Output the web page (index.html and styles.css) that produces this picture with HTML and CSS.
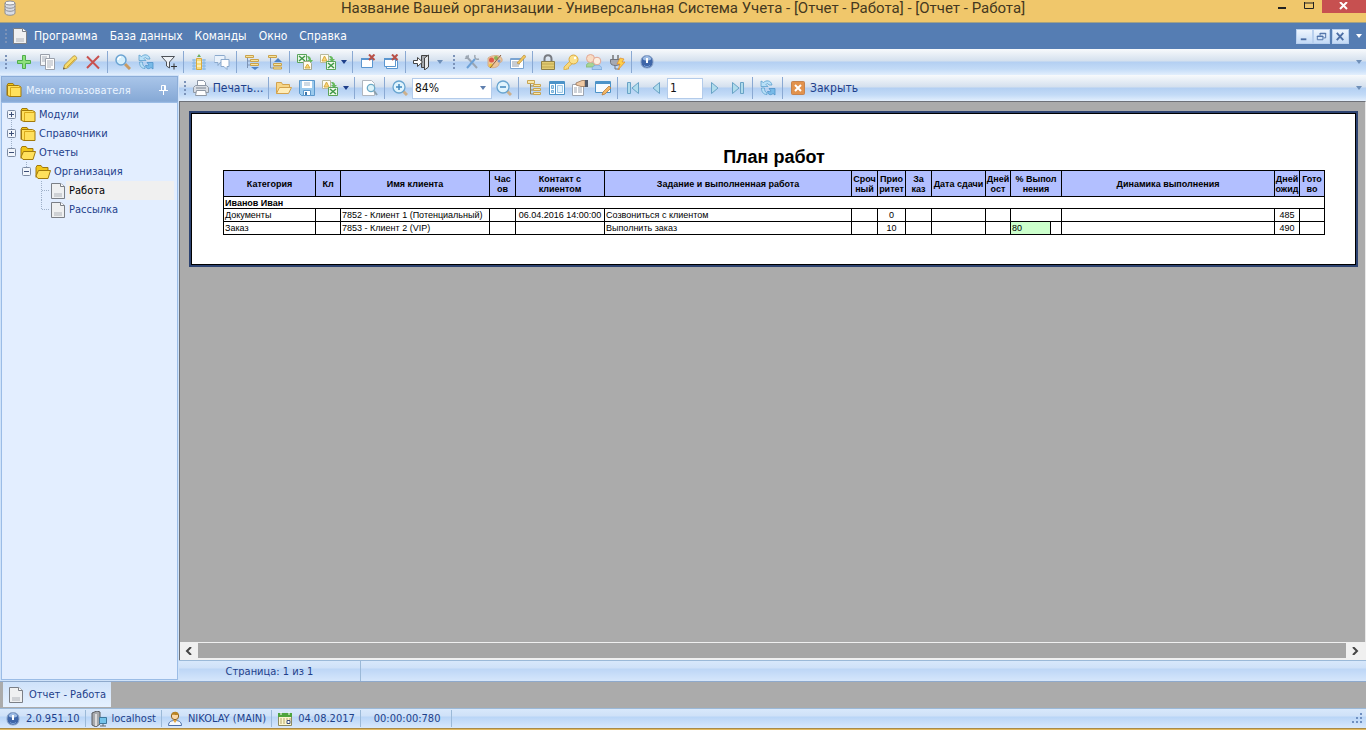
FILE: index.html
```html
<!DOCTYPE html>
<html lang="ru">

<head>
    <meta charset="UTF-8">
    <meta name="viewport" content="width=device-width, initial-scale=1.0">
    <title>Универсальная Система Учета</title>
    <link rel="stylesheet" href="styles.css">
</head>

<body>
    <svg class="sprite" aria-hidden="true">
        <symbol id="db" viewBox="0 0 16 16"><path d="M3 3v10c0 3 10 3 10 0V3" fill="#d9dce4" stroke="#8d8f98"/><ellipse cx="8" cy="3" rx="5" ry="2" fill="#f5f5f5" stroke="#8d8f98"/><path d="M3 6c0 3 10 3 10 0M3 9c0 3 10 3 10 0" fill="none" stroke="#8d8f98"/></symbol>
        <symbol id="doc" viewBox="0 0 16 16"><path d="M1.500 .5h9l4 3v12h-13z" fill="#eff0f1" stroke="#7b7f86"/><path d="M10.500 .5v3h4" fill="#fff" stroke="#7b7f86"/><path d="M4 11h8M4 13h8" stroke="#aeb2b8"/></symbol>
        <symbol id="plus" viewBox="0 0 16 16"><path d="M6.500 1.500h3v5h5v3h-5v5h-3v-5h-5v-3h5z" fill="#8ee07c" stroke="#4fae4c"/></symbol>
        <symbol id="copy" viewBox="0 0 16 16"><path d="M1.500 .5h9v11h-9z" fill="#f4f6f8" stroke="#9aa0aa"/><path d="M3 3h5M3 5h3M3 7h3" stroke="#a9afb9"/><path d="M6.500 4.500h9v11h-9z" fill="#fff" stroke="#9aa0aa"/><path d="M8 7h6M8 9h6M8 11h6M8 13h4" stroke="#a9afb9"/></symbol>
        <symbol id="pencil" viewBox="0 0 16 16"><path d="M1.500 15l1-4 9-9c1-1 4 1 3 3l-9 9z" fill="#f7dc6c" stroke="#b99a45"/><path d="M5 13l8-8" stroke="#d2a936"/><path d="M1 15.500l2-.7-1.300-1.500z" fill="#555"/></symbol>
        <symbol id="cross" viewBox="0 0 16 16"><path d="M2 2.500l12 12M14 2L2 14" stroke="#c9514f" stroke-width="2"/></symbol>
        <symbol id="find" viewBox="0 0 16 16"><path d="M10 10l5 5" stroke="#c99b63" stroke-width="3"/><circle cx="6" cy="6" r="5" fill="#d5effc" stroke="#6aa3d2" stroke-width="1.500"/><path d="M3 6a3 3 0 013-3" fill="none" stroke="#fff" stroke-width="1.500"/></symbol>
        <symbol id="refresh" viewBox="0 0 16 16"><path d="M1 1l2.500 1.500C6 0 11 0 12 5H9C8 3 6.500 3.500 6 4.500L8 6.500H1z" fill="#b9e0f7" stroke="#5b9fce" stroke-width=".8"/><path d="M1.500 8h3c0 2.500 .5 4 2.500 5v1.500c-4 0-5.500-3-5.500-6.500z" fill="#b9e0f7" stroke="#5b9fce" stroke-width=".8"/><path d="M15 15l-2-1.500C11 15.500 8 15 7.500 11.500h2c.5 .5 1 .5 1.500-.5L9 8.500h6z" fill="#78bae8" stroke="#4c92c8" stroke-width=".8"/></symbol>
        <symbol id="filter" viewBox="0 0 16 16"><path d="M.5 2.500h13L8.500 8v6l-3-2V8z" fill="#eef2f7" stroke="#4d5157"/><path d="M10 12.500h6M13 9.500v6" stroke="#333"/></symbol>
        <symbol id="sum" viewBox="0 0 16 16"><path d="M1 6h14M1 9h14M1 12h14M1 15h14M3 5v11M13 5v11" stroke="#85b7e3"/><path d="M5.500 4.500h5v11h-5z" fill="#f7dd7a" stroke="#d9a93e"/><path d="M6 8h4M6 12h4" stroke="#fff"/><path d="M8 0l2 3H6z" fill="#6fae60"/></symbol>
        <symbol id="chat" viewBox="0 0 16 16"><path d="M1 1.500h9a1 1 0 011 1v5a1 1 0 01-1 1H6l-2 3v-3H1a1 1 0 01-1-1v-5z" fill="#eaf2fb" stroke="#8ba9cc"/><path d="M7 5.500h8v7h-2v3l-3-3H7z" fill="#fff" stroke="#8ba9cc"/></symbol>
        <symbol id="expand" viewBox="0 0 16 16"><path d="M3.500 3v11M3.500 7H7M3.500 11H7" stroke="#7c93b5"/><path d="M1.500 1.500h8v2h-8zM6.500 5.500h8v2h-8zM6.500 9.500h8v2h-8z" fill="#f7e49c" stroke="#caa24b"/><path d="M7 13h8l-4 3z" fill="#4f83c4"/></symbol>
        <symbol id="collapse" viewBox="0 0 16 16"><path d="M3.500 3v11M3.500 14H7" stroke="#7c93b5"/><path d="M1.500 1.500h8v2h-8zM6.500 9.500h8v2h-8zM6.500 13h8v2h-8z" fill="#f7e49c" stroke="#caa24b"/><path d="M7 8h8l-4-4z" fill="#4f83c4"/></symbol>
        <symbol id="excel" viewBox="0 0 16 16"><path d="M.5 .5h9v8h-9z" fill="#eef8ea" stroke="#5aa45a"/><path d="M2 2l6 5M8 2L2 7" stroke="#3d9745" stroke-width="1.500"/><path d="M10 2c3 0 4 2 4 4h2l-3 4-3-4h2" fill="#66b95c"/><path d="M6.500 15.500V7.500h6l2 2v6z" fill="#fffdf0" stroke="#a5a98f"/><path d="M10.500 10l2.500 4H8z" fill="#f7d978" stroke="#d9a93e"/></symbol>
        <symbol id="toexcel" viewBox="0 0 16 16"><path d="M.5 .5h8v8h-8z" fill="#fffdf0" stroke="#b8b99c"/><path d="M4.500 2L7 7H2z" fill="#f7d978" stroke="#d9a93e"/><path d="M9 2c4 0 4 2 4 3h2l-3 3-3-3h2" fill="#66b95c"/><path d="M6.500 7.500h9v8h-9z" fill="#eef8ea" stroke="#5aa45a"/><path d="M8 9l6 5M14 9l-6 5" stroke="#3d9745" stroke-width="1.500"/></symbol>
        <symbol id="winclose" viewBox="0 0 16 16"><path d="M1.500 4.500h11v9h-11z" fill="#fff" stroke="#5b96cf"/><path d="M1 5h12" stroke="#5b96cf" stroke-width="2"/><path d="M9 .5l5.500 5.500M14.500 .5L9 6" stroke="#b85048" stroke-width="2"/></symbol>
        <symbol id="winsclose" viewBox="0 0 16 16"><path d="M3.500 6.500h11v8h-11z" fill="#fff" stroke="#5b96cf"/><path d="M1.500 4.500h11v8h-11z" fill="#fff" stroke="#5b96cf"/><path d="M1 5h12" stroke="#5b96cf" stroke-width="2"/><path d="M9 .5l5.500 5.500M14.500 .5L9 6" stroke="#b85048" stroke-width="2"/></symbol>
        <symbol id="exit" viewBox="0 0 16 16"><path d="M8.500 1.500h6v12h-6z" fill="#a7abb0" stroke="#444"/><path d="M11.500 4l4-3v12l-4 3z" fill="#e8eaec" stroke="#444"/><path d="M.5 6.500h4v-3l5 4.500-5 4.500v-3h-4z" fill="#fff" stroke="#444"/></symbol>
        <symbol id="tools" viewBox="0 0 16 16"><path d="M2 2l11 12" stroke="#9ba5b1" stroke-width="2"/><path d="M11 5L3 14" stroke="#6ba0d6" stroke-width="2"/><path d="M11 1c-1 3 1 5 4 4M1 4c2 1 4-1 3-3" fill="none" stroke="#9ba5b1" stroke-width="1.500"/></symbol>
        <symbol id="palette" viewBox="0 0 16 16"><path d="M1 4c3-3 13-4 14 1 1 4-3 3-3 5 0 4-9 5-11 2z" fill="#ebc59c" stroke="#d2a47b" stroke-width=".8"/><circle cx="4.500" cy="6" r="2.500" fill="#dd5a4a"/><circle cx="9" cy="4" r="2" fill="#8bb455"/><circle cx="4" cy="11.500" r="2" fill="#f2c93c"/><circle cx="12" cy="7" r="1.500" fill="#7b97c8"/><path d="M3 14L14 1" stroke="#8d5f40"/></symbol>
        <symbol id="editform" viewBox="0 0 16 16"><path d="M.5 4.500h13v10H.5z" fill="#fff" stroke="#7aa4d2"/><path d="M1 5h12" stroke="#7aa4d2" stroke-width="2"/><path d="M2 8h6M2 10h8M2 12h7" stroke="#8d98a6"/><path d="M7 9l7-8 2 1.500L9 10z" fill="#f3c85e" stroke="#b88c3c" stroke-width=".7"/></symbol>
        <symbol id="lock" viewBox="0 0 16 16"><path d="M4.500 8V5c0-5 7-5 7 0v3" fill="none" stroke="#777a80" stroke-width="2"/><path d="M1.500 7.500h13v8h-13z" fill="#e2cc73" stroke="#8f8048"/><path d="M2 10h12M2 13h12" stroke="#bfa750"/></symbol>
        <symbol id="key" viewBox="0 0 16 16"><path d="M1 13l7-7 2.500 2.500-5 4.500v2H3v1H1z" fill="#f9d97c" stroke="#d9a83e" stroke-width=".8"/><circle cx="10.500" cy="5.500" r="4.500" fill="#fbe08a" stroke="#d9a83e"/><circle cx="12" cy="4" r="1.200" fill="#fff"/></symbol>
        <symbol id="users" viewBox="0 0 16 16"><path d="M0 13c0-6 9-6 9 0z" fill="#a6d496" stroke="#80b871" stroke-width=".8"/><circle cx="4.500" cy="4.500" r="4" fill="#f8dcc4" stroke="#e2a794"/><path d="M6 15.500c0-6 10-6 10 0z" fill="#a9ccf0" stroke="#78a7da" stroke-width=".8"/><circle cx="11" cy="7" r="3.800" fill="#fdeee0" stroke="#e2a794"/></symbol>
        <symbol id="plug" viewBox="0 0 16 16"><path d="M4 1v5M9 1v5" stroke="#777" stroke-width="1.500"/><path d="M1.500 5.500h10v3c0 4-10 4-10 0z" fill="#a6a9b3" stroke="#72757e"/><path d="M6 11v4h5" stroke="#72757e" fill="none"/><path d="M11 4l4 1-2 3h3l-7 8 2-6H8z" fill="#ffd04a" stroke="#e08a2c" stroke-width=".7"/></symbol>
        <symbol id="info" viewBox="0 0 16 16"><rect x="2" y="1.500" width="12" height="12.500" rx="5.500" fill="#3f66a8" stroke="#8fa6c8"/><path d="M3.500 5c1-4 8-4 9 0-2 2-7 2-9 0z" fill="#9dbbe3"/><path d="M7 4h2v5H7z" fill="#fff"/><path d="M5 11.500c2 1.500 4 1.500 6 0" fill="none" stroke="#7ea3d8"/></symbol>
        <symbol id="print" viewBox="0 0 16 16"><path d="M4.500 7V.5h6l2 2V7" fill="#fff" stroke="#8c96a5"/><path d="M.5 7.500l2-2h11l2 2v5H.5z" fill="#d9dde3" stroke="#8f98a4"/><path d="M3.500 10.500h9l1 5h-11z" fill="#fff" stroke="#8f98a4"/><path d="M3 8h10" stroke="#7b8490"/></symbol>
        <symbol id="open" viewBox="0 0 16 16"><path d="M.5 13.500v-11h5l1 2h7v3" fill="#f7d688" stroke="#d3a24d"/><path d="M.5 13.500l3-6h12l-3 6z" fill="#ffedb8" stroke="#d3a24d"/></symbol>
        <symbol id="save" viewBox="0 0 16 16"><path d="M.5 .5h15v15h-13l-2-2z" fill="#9bcaed" stroke="#5b98cc"/><path d="M3 1h10v7H3z" fill="#fff"/><path d="M5 3h6M5 5h6" stroke="#9bb4c9"/><path d="M4.500 10.500h7v5h-7z" fill="#fff" stroke="#5b98cc"/><path d="M6 12h2v3H6z" fill="#3f78ac"/></symbol>
        <symbol id="preview" viewBox="0 0 16 16"><path d="M.5 .5h9l3 3v12H.5z" fill="#fff" stroke="#b0b6bf"/><circle cx="9" cy="8" r="3.700" fill="#ddf2f8" stroke="#6ba9c6" stroke-width="1.300"/><path d="M12 11l3 4" stroke="#8ba0ae" stroke-width="2"/></symbol>
        <symbol id="zoomin" viewBox="0 0 16 16"><path d="M11 11l4 4" stroke="#cdb08c" stroke-width="3"/><circle cx="7" cy="7" r="6" fill="#e0f4fd" stroke="#68a4cf" stroke-width="1.300"/><path d="M4 7h6M7 4v6" stroke="#4087bd" stroke-width="1.500"/></symbol>
        <symbol id="zoomout" viewBox="0 0 16 16"><path d="M11 11l4 4" stroke="#cdb08c" stroke-width="3"/><circle cx="7" cy="7" r="6" fill="#e0f4fd" stroke="#68a4cf" stroke-width="1.300"/><path d="M4 7h6" stroke="#4087bd" stroke-width="1.500"/></symbol>
        <symbol id="outline" viewBox="0 0 16 16"><path d="M4.500 3v11M4.500 6H8M4.500 10H8M4.500 14H8" stroke="#8f8258"/><path d="M1.500 .5h7v3h-7zM7.500 4.500h7v2h-7zM7.500 8.500h7v2h-7zM7.500 12.500h7v2h-7z" fill="#f7e7ac" stroke="#c9a552"/></symbol>
        <symbol id="thumbs" viewBox="0 0 16 16"><path d="M.5 1.500h15v13H.5z" fill="#fff" stroke="#4c93c8"/><path d="M1 3h14" stroke="#4c93c8" stroke-width="2"/><path d="M6.500 2v12" stroke="#4c93c8"/><path d="M2.500 5.500h2v3h-2zM2.500 10.500h2v2h-2z" fill="#b9dcf2" stroke="#73aed8"/><path d="M8.500 5.500h5v7h-5z" fill="#e3f2fb" stroke="#9fc9e6"/></symbol>
        <symbol id="props" viewBox="0 0 16 16"><path d="M.5 4.500h11v11H.5z" fill="#fff" stroke="#9da5b1"/><path d="M2 8h3M6 8h4M2 10h3M6 10h4M2 12h3M6 12h4" stroke="#9da5b1"/><path d="M4 3l6-2.500h3v6H9L4 5z" fill="#efc9a4" stroke="#97765b" stroke-width=".8"/><path d="M13 0h3v7h-3z" fill="#515a6a"/></symbol>
        <symbol id="pagesetup" viewBox="0 0 16 16"><path d="M.5 1.500h15v11H.5z" fill="#f6fbff" stroke="#4c93c8"/><path d="M1 3h14" stroke="#4c93c8" stroke-width="2"/><path d="M7 15l1-3 6-6 2 2-6 6z" fill="#f3b765" stroke="#b87c3c" stroke-width=".8"/></symbol>
        <symbol id="first" viewBox="0 0 16 16"><path d="M2.500 2.500h3v11h-3zM13.500 2.500v11L7 8z" fill="#b0dcec" stroke="#69a3c6"/></symbol>
        <symbol id="prev" viewBox="0 0 16 16"><path d="M11.500 2.500v11L5 8z" fill="#b0dcec" stroke="#69a3c6"/></symbol>
        <symbol id="next" viewBox="0 0 16 16"><path d="M4.500 2.500v11L11 8z" fill="#b0dcec" stroke="#69a3c6"/></symbol>
        <symbol id="last" viewBox="0 0 16 16"><path d="M2.500 2.500v11L9 8zM10.500 2.500h3v11h-3z" fill="#b0dcec" stroke="#69a3c6"/></symbol>
        <symbol id="closebox" viewBox="0 0 16 16"><rect x="1.500" y="1.500" width="13" height="13" rx="1" fill="#e2924c" stroke="#c48350"/><path d="M5 5l6 6M11 5l-6 6" stroke="#fff" stroke-width="2"/></symbol>
        <symbol id="folder" viewBox="0 0 16 16"><path d="M1 13.500v-10l1-2h5l1.500 2" fill="#f0c61a" stroke="#a1790c"/><path d="M1.500 13.500v-10h11l2.500 1.500v9.500h-11z" fill="#ffe05c" stroke="#a1790c"/><path d="M4.500 14V5.500h10" fill="none" stroke="#d9a91a"/></symbol>
        <symbol id="folderopen" viewBox="0 0 16 16"><path d="M1 13.500v-10l1-2h4l1.500 2h5.500V7" fill="#f0c61a" stroke="#a1790c"/><path d="M3 14.500L1 12l2.500-5.500h12L13 14.500z" fill="#ffe05c" stroke="#a1790c"/></symbol>
        <symbol id="pin" viewBox="0 0 16 16"><path d="M6.500 8V3.500h4V8M4 8.500h9M8.500 9v4M9.500 4v4" fill="none" stroke="#fff"/></symbol>
        <symbol id="server" viewBox="0 0 16 16"><path d="M1 2l5-2 3 1v12l-4 3-4-2z" fill="#a7a9ac" stroke="#5b5d61"/><path d="M5 3v12" stroke="#eee" stroke-width="1.500"/><path d="M8.500 6.500h7v6h-7z" fill="#74c3ea" stroke="#3f789c"/><path d="M9 15h6M12 13v2" stroke="#60696f"/></symbol>
        <symbol id="user" viewBox="0 0 16 16"><path d="M1.500 14.500c0-4 3-5 6.500-5s6.500 1 6.500 5z" fill="#f5f8fc" stroke="#4b6fa8"/><path d="M6 9l2 3 2-3z" fill="#e6a63c"/><circle cx="8" cy="5" r="3.700" fill="#fbd7a5" stroke="#8c6222"/><path d="M4.500 4c1-4.500 7-4 7 0-3 .5-4-1-7 0z" fill="#b98424"/></symbol>
        <symbol id="calendar" viewBox="0 0 16 16"><path d="M1.500 2.500h13v12h-13z" fill="#fcf6d0" stroke="#8d8a62"/><path d="M1 2h14v4H1z" fill="#4ea43e"/><path d="M4 1v3M12 1v3" stroke="#fff"/><path d="M3 8h2M6 8h2M9 8h2M12 8h2M3 10h2M6 10h2M3 12h2M6 12h2" stroke="#b5a66a"/><path d="M10 9.500h3v3h-3z" fill="#fff" stroke="#3d4f78"/></symbol>
        <symbol id="down" viewBox="0 0 6 4"><path d="M0 0h6L3 4z" fill="currentColor"/></symbol>
        <!-- tree nodes: box plus dotted connectors -->
        <symbol id="node-plus-first" viewBox="0 0 13 19"><path d="M4.500 15v4" stroke="#9fb0c8" stroke-dasharray="1 1"/><rect x=".5" y="5.500" width="8" height="8" rx="1" fill="#f1f5fb" stroke="#7d8ba3"/><path d="M2 9.500h5M4.500 7v5" stroke="#3d4f78"/></symbol>
        <symbol id="node-plus" viewBox="0 0 13 19"><path d="M4.500 0v5M4.500 15v4" stroke="#9fb0c8" stroke-dasharray="1 1"/><rect x=".5" y="5.500" width="8" height="8" rx="1" fill="#f1f5fb" stroke="#7d8ba3"/><path d="M2 9.500h5M4.500 7v5" stroke="#3d4f78"/></symbol>
        <symbol id="node-minus" viewBox="0 0 13 19"><path d="M4.500 0v5" stroke="#9fb0c8" stroke-dasharray="1 1"/><rect x=".5" y="5.500" width="8" height="8" rx="1" fill="#f1f5fb" stroke="#7d8ba3"/><path d="M2 9.500h5" stroke="#3d4f78"/></symbol>
        <symbol id="branch" viewBox="0 0 13 19"><path d="M4.500 0v19M5 9.500h8" stroke="#9fb0c8" stroke-dasharray="1 1"/></symbol>
        <symbol id="branch-last" viewBox="0 0 13 19"><path d="M4.500 0v9M5 9.500h8" stroke="#9fb0c8" stroke-dasharray="1 1"/></symbol>
    </svg>

    <header class="titlebar">
        <svg class="icon title-icon"><use href="#db"/></svg>
        <h1>Название Вашей организации - Универсальная Система Учета - [Отчет - Работа] - [Отчет - Работа]</h1>
        <div class="window-buttons">
            <button type="button" class="win-min" aria-label="Свернуть"><svg viewBox="0 0 10 10"><path d="M1 6h8" stroke="#222" stroke-width="2"/></svg></button>
            <button type="button" class="win-max" aria-label="Развернуть"><svg viewBox="0 0 10 10"><path d="M.5 0v6.500h9V0M0 1h10" fill="none" stroke="#222"/></svg></button>
            <button type="button" class="win-close" aria-label="Закрыть окно"><svg viewBox="0 0 10 10"><path d="M1 0l7 7M8 0L1 7" stroke="#fff" stroke-width="2"/></svg></button>
        </div>
    </header>

    <nav class="menubar">
        <span class="grip"></span>
        <svg class="icon"><use href="#doc"/></svg>
        <button type="button">Программа</button>
        <button type="button">База данных</button>
        <button type="button">Команды</button>
        <button type="button">Окно</button>
        <button type="button">Справка</button>
        <div class="mdi-buttons">
            <button type="button" aria-label="Свернуть отчет"><svg viewBox="0 0 16 14"><path d="M4 10h6" stroke="#4c6ea5" stroke-width="2"/></svg></button>
            <button type="button" aria-label="Восстановить отчет"><svg viewBox="0 0 16 14"><path d="M6.500 6V3.500h6v5H10M6 4h7M3.500 6.500h6v4h-6zM3 7h7" fill="none" stroke="#4c6ea5"/></svg></button>
            <button type="button" class="mdi-close" aria-label="Закрыть отчет"><svg viewBox="0 0 16 14"><path d="M4 3l7 8M11 3l-7 8" stroke="#4c6ea5" stroke-width="2"/></svg></button>
            <svg class="arrow"><use href="#down"/></svg>
        </div>
    </nav>

    <div class="toolbar">
        <span class="grip"></span>
        <button type="button" class="tool" aria-label="Добавить"><svg class="icon"><use href="#plus"/></svg></button>
        <button type="button" class="tool" aria-label="Копировать"><svg class="icon"><use href="#copy"/></svg></button>
        <button type="button" class="tool" aria-label="Изменить"><svg class="icon"><use href="#pencil"/></svg></button>
        <button type="button" class="tool" aria-label="Удалить"><svg class="icon"><use href="#cross"/></svg></button>
        <span class="separator"></span>
        <button type="button" class="tool" aria-label="Поиск"><svg class="icon"><use href="#find"/></svg></button>
        <button type="button" class="tool" aria-label="Обновить"><svg class="icon"><use href="#refresh"/></svg></button>
        <button type="button" class="tool" aria-label="Фильтр"><svg class="icon"><use href="#filter"/></svg></button>
        <span class="separator"></span>
        <button type="button" class="tool" aria-label="Итоги"><svg class="icon"><use href="#sum"/></svg></button>
        <button type="button" class="tool" aria-label="Примечания"><svg class="icon"><use href="#chat"/></svg></button>
        <span class="separator"></span>
        <button type="button" class="tool" aria-label="Развернуть все"><svg class="icon"><use href="#expand"/></svg></button>
        <button type="button" class="tool" aria-label="Свернуть все"><svg class="icon"><use href="#collapse"/></svg></button>
        <span class="separator"></span>
        <button type="button" class="tool" aria-label="Импорт"><svg class="icon"><use href="#excel"/></svg></button>
        <button type="button" class="tool" aria-label="Экспорт"><svg class="icon"><use href="#toexcel"/></svg></button>
        <button type="button" class="drop" aria-label="Варианты экспорта"><svg class="arrow"><use href="#down"/></svg></button>
        <span class="separator"></span>
        <button type="button" class="tool" aria-label="Закрыть вкладку"><svg class="icon"><use href="#winclose"/></svg></button>
        <button type="button" class="tool" aria-label="Закрыть все вкладки"><svg class="icon"><use href="#winsclose"/></svg></button>
        <span class="separator"></span>
        <button type="button" class="tool" aria-label="Выход"><svg class="icon"><use href="#exit"/></svg></button>
        <button type="button" class="drop drop-end" aria-label="Настройка панели"><svg class="arrow"><use href="#down"/></svg></button>
        <span class="grip"></span>
        <button type="button" class="tool" aria-label="Настройки"><svg class="icon"><use href="#tools"/></svg></button>
        <button type="button" class="tool" aria-label="Оформление"><svg class="icon"><use href="#palette"/></svg></button>
        <button type="button" class="tool" aria-label="Форма"><svg class="icon"><use href="#editform"/></svg></button>
        <span class="separator"></span>
        <button type="button" class="tool" aria-label="Блокировка"><svg class="icon"><use href="#lock"/></svg></button>
        <button type="button" class="tool" aria-label="Права"><svg class="icon"><use href="#key"/></svg></button>
        <button type="button" class="tool" aria-label="Пользователи"><svg class="icon"><use href="#users"/></svg></button>
        <button type="button" class="tool" aria-label="Подключения"><svg class="icon"><use href="#plug"/></svg></button>
        <span class="separator"></span>
        <button type="button" class="tool" aria-label="О программе"><svg class="icon"><use href="#info"/></svg></button>
        <svg class="arrow toolbar-end"><use href="#down"/></svg>
    </div>

    <div class="workspace">
        <aside class="sidebar">
            <div class="sidebar-header">
                <svg class="icon"><use href="#folder"/></svg>
                <h2>Меню пользователя</h2>
                <button type="button" aria-label="Закрепить"><svg class="icon"><use href="#pin"/></svg></button>
            </div>
            <ul class="tree">
                <li><a href="#"><svg class="node"><use href="#node-plus-first"/></svg><svg class="icon"><use href="#folder"/></svg><span>Модули</span></a></li>
                <li><a href="#"><svg class="node"><use href="#node-plus"/></svg><svg class="icon"><use href="#folder"/></svg><span>Справочники</span></a></li>
                <li><a href="#"><svg class="node"><use href="#node-minus"/></svg><svg class="icon"><use href="#folderopen"/></svg><span>Отчеты</span></a>
                    <ul>
                        <li><a href="#"><svg class="node"><use href="#node-minus"/></svg><svg class="icon"><use href="#folderopen"/></svg><span>Организация</span></a>
                            <ul>
                                <li><a href="#" class="active"><svg class="node"><use href="#branch"/></svg><svg class="icon"><use href="#doc"/></svg><span>Работа</span></a></li>
                                <li><a href="#"><svg class="node"><use href="#branch-last"/></svg><svg class="icon"><use href="#doc"/></svg><span>Рассылка</span></a></li>
                            </ul>
                        </li>
                    </ul>
                </li>
            </ul>
        </aside>

        <main class="report">
            <div class="toolbar">
                <span class="grip"></span>
                <button type="button" class="tool-text print"><svg class="icon"><use href="#print"/></svg>Печать...</button>
                <span class="separator"></span>
                <button type="button" class="tool" aria-label="Открыть"><svg class="icon"><use href="#open"/></svg></button>
                <button type="button" class="tool" aria-label="Сохранить"><svg class="icon"><use href="#save"/></svg></button>
                <button type="button" class="tool" aria-label="Экспорт отчета"><svg class="icon"><use href="#toexcel"/></svg></button>
                <button type="button" class="drop" aria-label="Формат экспорта"><svg class="arrow"><use href="#down"/></svg></button>
                <span class="separator"></span>
                <button type="button" class="tool" aria-label="Найти в отчете"><svg class="icon"><use href="#preview"/></svg></button>
                <span class="separator"></span>
                <button type="button" class="tool" aria-label="Увеличить"><svg class="icon"><use href="#zoomin"/></svg></button>
                <span class="combo">
                    <select aria-label="Масштаб"><option>84%</option><option>100%</option></select>
                    <svg class="arrow"><use href="#down"/></svg>
                </span>
                <button type="button" class="tool" aria-label="Уменьшить"><svg class="icon"><use href="#zoomout"/></svg></button>
                <span class="separator"></span>
                <button type="button" class="tool" aria-label="Структура"><svg class="icon"><use href="#outline"/></svg></button>
                <button type="button" class="tool" aria-label="Миниатюры"><svg class="icon"><use href="#thumbs"/></svg></button>
                <button type="button" class="tool" aria-label="Параметры страницы"><svg class="icon"><use href="#props"/></svg></button>
                <button type="button" class="tool" aria-label="Изменить страницу"><svg class="icon"><use href="#pagesetup"/></svg></button>
                <span class="separator"></span>
                <button type="button" class="tool" aria-label="Первая страница"><svg class="icon"><use href="#first"/></svg></button>
                <button type="button" class="tool" aria-label="Предыдущая страница"><svg class="icon"><use href="#prev"/></svg></button>
                <input type="text" class="page-number" value="1" aria-label="Номер страницы">
                <button type="button" class="tool" aria-label="Следующая страница"><svg class="icon"><use href="#next"/></svg></button>
                <button type="button" class="tool" aria-label="Последняя страница"><svg class="icon"><use href="#last"/></svg></button>
                <span class="separator"></span>
                <button type="button" class="tool" aria-label="Обновить отчет"><svg class="icon"><use href="#refresh"/></svg></button>
                <span class="separator"></span>
                <button type="button" class="tool-text"><svg class="icon"><use href="#closebox"/></svg>Закрыть</button>
                <svg class="arrow toolbar-end"><use href="#down"/></svg>
            </div>

            <div class="viewport">
                <div class="page">
                    <h2>План работ</h2>
                    <table>
                        <colgroup>
                            <col class="c-category"><col class="c-small"><col class="c-client"><col class="c-mid"><col class="c-contact">
                            <col class="c-task"><col class="c-mid"><col class="c-priority"><col class="c-mid"><col class="c-date">
                            <col class="c-small"><col class="c-percent"><col class="c-dynamics"><col class="c-small"><col class="c-small">
                        </colgroup>
                        <thead>
                            <tr>
                                <th>Категория</th>
                                <th>Кл</th>
                                <th>Имя клиента</th>
                                <th>Час<br>ов</th>
                                <th>Контакт с<br>клиентом</th>
                                <th>Задание и выполненная работа</th>
                                <th>Сроч<br>ный</th>
                                <th>Прио<br>ритет</th>
                                <th>За<br>каз</th>
                                <th>Дата сдачи</th>
                                <th>Дней<br>ост</th>
                                <th>% Выпол<br>нения</th>
                                <th>Динамика выполнения</th>
                                <th>Дней<br>ожид</th>
                                <th>Гото<br>во</th>
                            </tr>
                        </thead>
                        <tbody>
                            <tr class="group">
                                <td colspan="15">Иванов Иван</td>
                            </tr>
                            <tr>
                                <td>Документы</td>
                                <td></td>
                                <td>7852 - Клиент 1 (Потенциальный)</td>
                                <td></td>
                                <td class="center">06.04.2016 14:00:00</td>
                                <td>Созвониться с клиентом</td>
                                <td></td>
                                <td class="center">0</td>
                                <td></td>
                                <td></td>
                                <td></td>
                                <td></td>
                                <td></td>
                                <td class="center">485</td>
                                <td></td>
                            </tr>
                            <tr>
                                <td>Заказ</td>
                                <td></td>
                                <td>7853 - Клиент 2 (VIP)</td>
                                <td></td>
                                <td></td>
                                <td>Выполнить заказ</td>
                                <td></td>
                                <td class="center">10</td>
                                <td></td>
                                <td></td>
                                <td></td>
                                <td class="percent"><div class="bar" style="width: 80%">80</div></td>
                                <td></td>
                                <td class="center">490</td>
                                <td></td>
                            </tr>
                        </tbody>
                    </table>
                </div>
            </div>

            <div class="scrollbar">
                <button type="button" aria-label="Влево"><svg viewBox="0 0 8 8"><path d="M6 0L2 4l4 4" fill="none" stroke="#444" stroke-width="2"/></svg></button>
                <div class="thumb"></div>
                <button type="button" aria-label="Вправо"><svg viewBox="0 0 8 8"><path d="M2 0l4 4-4 4" fill="none" stroke="#444" stroke-width="2"/></svg></button>
            </div>
            <div class="page-status"><span>Страница: 1 из 1</span></div>
        </main>
    </div>

    <div class="tabs">
        <button type="button"><svg class="icon"><use href="#doc"/></svg>Отчет - Работа</button>
    </div>

    <footer class="statusbar">
        <span class="status-item"><svg class="icon"><use href="#info"/></svg>2.0.951.10</span>
        <span class="status-item"><svg class="icon"><use href="#server"/></svg>localhost</span>
        <span class="status-item"><svg class="icon"><use href="#user"/></svg>NIKOLAY (MAIN)</span>
        <span class="status-item"><svg class="icon"><use href="#calendar"/></svg>04.08.2017</span>
        <span class="status-item timer">00:00:00:780</span>
        <svg class="resize" viewBox="0 0 12 12"><path d="M8 0h2v2H8zM4 4h2v2H4zM8 4h2v2H8zM0 8h2v2H0zM4 8h2v2H4zM8 8h2v2H8z" fill="#6f8fc0"/></svg>
    </footer>
    <div class="taskbar"></div>
</body>

</html>
```
FILE: styles.css
```css
* {
    box-sizing: border-box;
}

body {
    margin: 0;
    height: 100vh;
    display: flex;
    flex-direction: column;
    overflow: hidden;
    font-family: "DejaVu Sans Condensed", "DejaVu Sans", sans-serif;
    font-stretch: condensed;
    font-size: 11px;
    color: #1e3f8a;
    background-color: #ababab;
}

h1, h2 {
    margin: 0;
    font-weight: normal;
}

button {
    display: flex;
    align-items: center;
    justify-content: center;
    padding: 0;
    border: none;
    background: none;
    font: inherit;
    color: inherit;
    white-space: nowrap;
}

svg {
    display: block;
    flex: none;
}

.sprite {
    display: none;
}

.icon {
    width: 16px;
    height: 16px;
}

.arrow {
    width: 6px;
    height: 4px;
}

/* Title */
.titlebar {
    display: grid;
    grid-template-columns: 1fr auto 1fr;
    align-items: start;
    height: 23px;
    background-color: #f0c76b;
    border-bottom: 1px solid #a3a183;
}

.title-icon {
    margin-left: 2px;
}

.titlebar h1 {
    font-family: Roboto, "Noto Sans", sans-serif;
    font-stretch: normal;
    font-size: 15px;
    line-height: 16px;
    color: #443820;
    white-space: nowrap;
}

.window-buttons {
    display: flex;
    justify-content: flex-end;
}

.window-buttons button {
    width: 27px;
    height: 13px;
}

.window-buttons svg {
    width: 10px;
    height: 10px;
}

.window-buttons .win-close {
    width: 44px;
    background-color: #c75050;
}

/* Menu */
.menubar {
    display: flex;
    align-items: center;
    height: 26px;
    background-color: #557db3;
    font-size: 12px;
    color: #fff;
}

.menubar > button {
    margin-left: 12px;
}

.menubar > .icon + button {
    margin-left: 6px;
}

.mdi-buttons {
    display: flex;
    align-items: center;
    margin-left: auto;
}

.mdi-buttons button {
    width: 17px;
    height: 15px;
    background: linear-gradient(#eef5fe, #c3daf6);
    border: 1px solid #b9d0ee;
}

.mdi-buttons button svg {
    width: 15px;
    height: 13px;
}

.mdi-buttons .mdi-close {
    margin-left: 2px;
}

.mdi-buttons .arrow {
    margin: 0 4px 0 7px;
}

.grip {
    flex: none;
    align-self: center;
    width: 2px;
    height: 14px;
    margin: 0 5px;
    background: repeating-linear-gradient(#7b92b8 0 2px, transparent 2px 4px);
}

/* Toolbars */
.toolbar {
    flex: none;
    display: flex;
    align-items: center;
    height: 26px;
    background: linear-gradient(#f8fafc 0, #d4e0ee 12px, #b3cff2 13px, #c3dbf7 20px, #e3effd 26px);
}

.tool {
    width: 23px;
    height: 24px;
}

.tool-text {
    gap: 4px;
    padding: 0 4px;
    height: 24px;
    font-size: 12px;
}

.print {
    width: 74px;
}

.separator {
    flex: none;
    width: 7px;
    height: 22px;
    background: linear-gradient(#8aa9d3, #8aa9d3) 3px 0 / 1px 100% no-repeat;
}

.drop {
    width: 10px;
    height: 24px;
}

.drop-end {
    width: 16px;
    color: #6f8fb8;
}

.toolbar-end {
    margin-left: auto;
    margin-right: 4px;
    color: #6f8fb8;
}

.combo {
    display: flex;
    align-items: center;
    width: 80px;
    height: 21px;
    margin-left: 1px;
    padding-right: 5px;
    background-color: #fff;
    border: 1px solid #b3cbea;
    color: #5f7fae;
}

.combo select {
    flex: 1;
    appearance: none;
    border: none;
    padding: 0 2px;
    background: none;
    font: inherit;
    font-size: 12px;
    color: #111;
}

.page-number {
    width: 36px;
    height: 21px;
    padding: 0 2px;
    border: 1px solid #b3cbea;
    font: inherit;
    font-size: 12px;
    color: #111;
}

/* Main area */
.workspace {
    flex: 1;
    min-height: 0;
    display: flex;
    border-bottom: 1px solid #8ea9cc;
}

.sidebar {
    flex: none;
    display: flex;
    flex-direction: column;
    width: 179px;
    padding: 1px;
    background-color: #cfe2f9;
}

.sidebar-header {
    display: flex;
    align-items: center;
    gap: 4px;
    height: 26px;
    padding: 2px 6px 0 4px;
    background: linear-gradient(#a9c5e9, #86a9d6);
    border: 1px solid #8cadd8;
    color: #e9f3ff;
}

.sidebar-header h2 {
    flex: 1;
    font-size: 11px;
}

.tree {
    flex: 1;
    padding: 2px 3px;
    background-color: #e3eeff;
    border: 1px solid #9bbce6;
}

.tree, .tree ul {
    margin: 0;
    list-style: none;
}

.tree ul {
    padding: 0 0 0 15px;
}

.tree a {
    display: flex;
    align-items: center;
    height: 19px;
    padding-left: 2px;
    color: inherit;
    text-decoration: none;
}

.tree span {
    flex: 1;
    padding: 0 3px;
    line-height: 19px;
}

.tree .active span {
    background-color: #f0f0f0;
    color: #000;
}

.node {
    width: 13px;
    height: 19px;
}

.report {
    flex: 1;
    min-width: 0;
    display: flex;
    flex-direction: column;
}

.viewport {
    flex: 1;
    min-height: 0;
    padding: 9px 7px 8px 9px;
    background-color: #ababab;
    border: 1px solid #6d7077;
    border-right: 1px solid #e8e8e8;
    border-bottom: none;
}

.page {
    margin: 2px;
    padding: 32px 30px 29px 31px;
    background-color: #fff;
    border: 1px solid #000;
    box-shadow: 0 0 0 2px #2c4270;
}

.page h2 {
    padding-bottom: 2px;
    font-family: "Liberation Sans", Arial, sans-serif;
    font-stretch: normal;
    font-size: 18px;
    line-height: 22px;
    font-weight: bold;
    text-align: center;
    color: #000;
}

.page table {
    width: 100%;
    table-layout: fixed;
    border-collapse: collapse;
    font-family: "Liberation Sans", Arial, sans-serif;
    font-stretch: normal;
    font-size: 9px;
    line-height: 10px;
    color: #000;
}

.c-category { width: 92px; }
.c-small { width: 25px; }
.c-mid { width: 26px; }
.c-client { width: 149px; }
.c-contact { width: 89px; }
.c-task { width: 247px; }
.c-priority { width: 28px; }
.c-date { width: 54px; }
.c-percent { width: 51px; }
.c-dynamics { width: 213px; }

th, td {
    border: 1px solid #000;
    white-space: nowrap;
}

th {
    height: 26px;
    padding: 0;
    background-color: #b2bfff;
}

td {
    height: 13px;
    padding: 0 1px;
}

.group td {
    height: 12px;
    font-weight: bold;
}

.center {
    text-align: center;
}

.percent {
    padding: 0;
}

.bar {
    height: 12px;
    padding: 1px;
    background-color: #ccffcc;
    border-right: 1px solid #000;
}

.scrollbar {
    flex: none;
    display: flex;
    height: 18px;
    padding: 1px 2px 2px 0;
    background-color: #f0f0f0;
    border-left: 1px solid #6d7077;
}

.scrollbar button {
    width: 18px;
}

.scrollbar button svg {
    width: 8px;
    height: 8px;
}

.thumb {
    flex: 1;
    background-color: #a6a6a6;
}

.page-status {
    flex: none;
    height: 21px;
    border-top: 1px solid #9bb9d8;
    background: linear-gradient(#d8e8fb 0, #cfe1f8 7px, #bdd6f6 8px, #d5e6fb 20px);
}

.page-status span {
    display: block;
    width: 182px;
    padding-top: 1px;
    line-height: 19px;
    text-align: center;
    border-right: 1px solid #9bb9d8;
}

/* Bottom */
.tabs {
    flex: none;
    display: flex;
    height: 26px;
    padding-left: 3px;
    background-color: #ababab;
}

.tabs button {
    gap: 5px;
    height: 25px;
    padding: 0 5px;
    background: linear-gradient(#cfe2fa, #e6f1fe);
}

.statusbar {
    flex: none;
    display: flex;
    align-items: center;
    height: 20px;
    border-top: 1px solid #9bb9d8;
    background: linear-gradient(#d8e8fb 0, #cfe1f8 7px, #b9d5f7 8px, #d8e8fc 19px);
}

.status-item {
    display: flex;
    align-items: center;
    gap: 5px;
    height: 17px;
    padding: 0 5px;
    border-right: 1px solid #9bb9d8;
}

.timer {
    padding: 0 11px 0 13px;
}

.resize {
    width: 12px;
    height: 12px;
    margin-left: auto;
    margin-right: 2px;
}

.taskbar {
    flex: none;
    height: 2px;
    background-color: #e3b95e;
    border-top: 1px solid #a98b48;
}
```
